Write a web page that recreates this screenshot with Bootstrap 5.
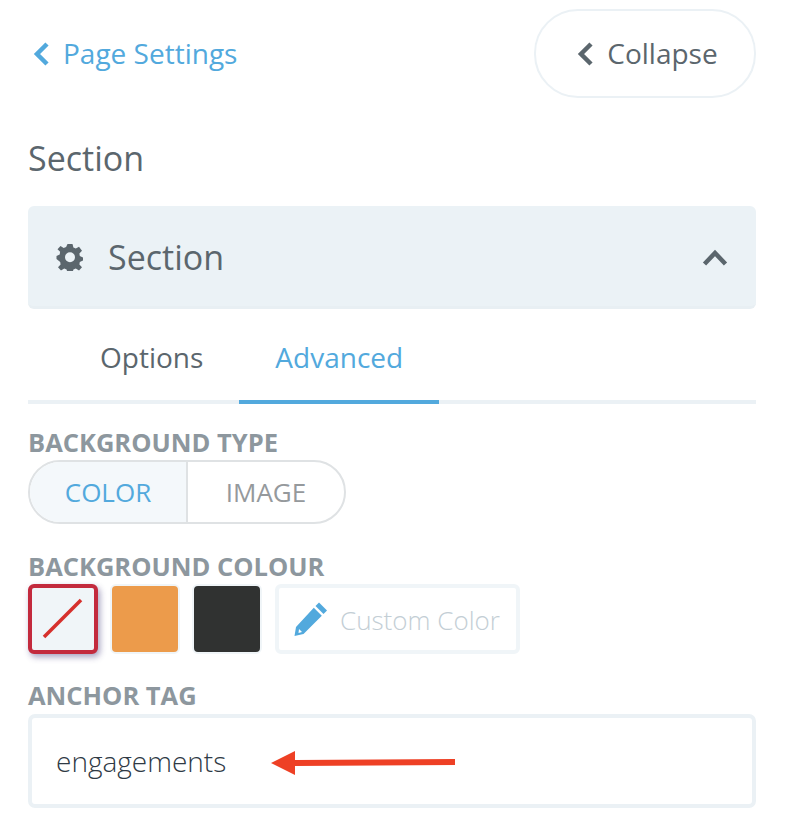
<!DOCTYPE html>
<html lang="en"><head><meta charset="utf-8"><title>Section</title>
<link rel="stylesheet" href="https://cdn.jsdelivr.net/npm/bootstrap@5.3.0/dist/css/bootstrap.min.css">
<style>
html,body{background:#fff;overflow:hidden}
body{font-family:"Open Sans",sans-serif;color:#5b666d;height:824px}
.panel-wrap{padding:9px 30px 0 28px}
.top-row{height:88px}
.back-link{color:#52a9dd;font-size:28px;text-decoration:none;line-height:36px;padding:0 0 0 5px}
.back-link svg{margin-right:13px;margin-top:1px}
.collapse-btn{width:222px;height:89px;border:2px solid #ebf1f5;border-radius:44px;background:#fff;font-size:28px;color:#5b666d;gap:13px;padding:0 0 0 5px}
.collapse-btn svg{margin-top:1px}
.page-title{font-size:34px;font-weight:400;line-height:44px;margin:39px 0 26px;color:#5b666d}
.section-bar{height:103px;background:#ebf2f6;border-radius:6px;padding:0 28px 0 28px;border-bottom:3px solid #e8eff3}
.section-bar>svg{margin-top:2px}
.section-bar span{font-size:34px;margin-left:24px;line-height:44px;padding-top:2px}
.section-bar svg.ms-auto{margin-top:4px}
.tab-row{padding-left:37px;height:95px;border-bottom:4px solid #ebf1f5;margin-bottom:0}
.tab-item{color:#5b666d;font-size:28px;line-height:36px;padding:30px 36px 0;height:95px;text-decoration:none;margin-bottom:-4px;border-bottom:4px solid transparent}
.tab-item.first-tab{padding-left:35px}
.tab-item.on{color:#52a9dd;border-bottom-color:#52a9dd}
.field-label{display:block;font-size:25.5px;font-weight:700;color:#8d979e;line-height:32px;margin:0;text-transform:uppercase}
.type-label{margin-top:22px}
.colour-label{margin-top:26px}
.toggle-grp{width:318px;height:64px;border:2px solid #dfe2e4;border-radius:32px;overflow:hidden;margin-top:2px;font-size:26px}
.toggle-opt{height:100%;color:#95999c}
.toggle-opt.first{width:158px;background:#f4f8fb;color:#52a9dd;border-right:2px solid #dfe2e4}
.swatch-row{gap:12px;margin-top:2px}
.swatch{width:70px;height:70px;border-radius:6px;border:2px solid #ebf1f5}
.swatch.none{background:#f0f5f8;border:4px solid #c32a3d;box-shadow:2px 3px 6px rgba(60,50,120,.45)}
.swatch.amber{background:#ec9b4b;border-color:#f0f5f8}
.swatch.dark{background:#303231;border-color:#f0f5f8}
.custom-box{width:245px;height:70px;border:4px solid #f0f5f8;border-radius:6px;color:#c3ced5;font-size:26px;font-weight:300;padding:3px 0 0 15px;gap:12px;margin-left:1px}
.custom-box svg{margin-top:-3px}
.anchor-label{margin-top:25px}
.anchor-box{height:94px;border:4px solid #ebf1f5;border-radius:7px;padding:0 0 0 24px;font-size:28px;font-weight:300;color:#2f3a45;margin-top:3px}
.arrow-mark{position:absolute;left:239px;top:32px}
</style></head>
<body>
<div class="panel-wrap">
  <div class="d-flex justify-content-between align-items-center top-row">
    <a class="back-link d-flex align-items-center" href="#"><svg width="17" height="24" viewBox="0 0 17 24"><path d="M14 2 L4 12 L14 22" fill="none" stroke="#52a9dd" stroke-width="4.5"/></svg>Page Settings</a>
    <button class="collapse-btn d-flex align-items-center justify-content-center" type="button"><svg width="17" height="24" viewBox="0 0 17 24"><path d="M14 2 L4 12 L14 22" fill="none" stroke="#5b666d" stroke-width="4.5"/></svg>Collapse</button>
  </div>
  <h2 class="page-title">Section</h2>
  <div class="section-bar d-flex align-items-center">
    <svg width="28" height="28" viewBox="0 0 28 28"><path fill="#5b666d" fill-rule="evenodd" d="M11.5 1h5l.9 3.6 2.4 1 3.2-1.9 3 4.1-2.6 2.6.4 2.6 3.2 1.5v3l-3.2 1.5-.4 2.6 2.6 2.6-3 3.2-3.2-1.9-2.4 1-.9 3.4h-5l-.9-3.4-2.4-1-3.2 1.9-3-3.2 2.6-2.6-.4-2.6L.5 15.9v-3l3.2-1.5.4-2.6-2.6-2.6 3-3.2 3.2 1.9 2.4-1z M14 9.2a5 5 0 1 0 0 10a5 5 0 1 0 0-10z"/></svg>
    <span>Section</span>
    <svg class="ms-auto" width="26" height="18" viewBox="0 0 26 18"><path d="M2.5 15 L13 4 L23.5 15" fill="none" stroke="#5b666d" stroke-width="4.5"/></svg>
  </div>
  <div class="tab-row d-flex">
    <a class="tab-item first-tab" href="#">Options</a>
    <a class="tab-item on" href="#">Advanced</a>
  </div>
  <label class="field-label type-label">Background Type</label>
  <div class="toggle-grp d-flex">
    <div class="toggle-opt first d-flex align-items-center justify-content-center">COLOR</div>
    <div class="toggle-opt flex-grow-1 d-flex align-items-center justify-content-center">IMAGE</div>
  </div>
  <label class="field-label colour-label">Background Colour</label>
  <div class="swatch-row d-flex">
    <div class="swatch none d-flex align-items-center justify-content-center"><svg width="42" height="42" viewBox="0 0 42 42"><line x1="2" y1="39" x2="39" y2="2" stroke="#d6302c" stroke-width="3.5"/></svg></div>
    <div class="swatch amber"></div>
    <div class="swatch dark"></div>
    <div class="custom-box d-flex align-items-center">
      <svg width="34" height="36" viewBox="0 0 34 36"><path fill="#52a9dd" d="M25 1.5 33 9.5 29.5 13 21.5 5z M19.8 6.8 27.8 14.8 9.5 33 .5 35 2 26z"/><path fill="#fff" d="M5 28l3 3-3.5 1z"/></svg>
      <span>Custom Color</span>
    </div>
  </div>
  <label class="field-label anchor-label">Anchor Tag</label>
  <div class="anchor-box d-flex align-items-center position-relative">engagements
    <svg class="arrow-mark" width="184" height="26" viewBox="0 0 184 26"><path fill="#ee4025" d="M0 13 24 1V10L184 9V15L24 16V25z"/></svg>
  </div>
</div>
</body></html>
